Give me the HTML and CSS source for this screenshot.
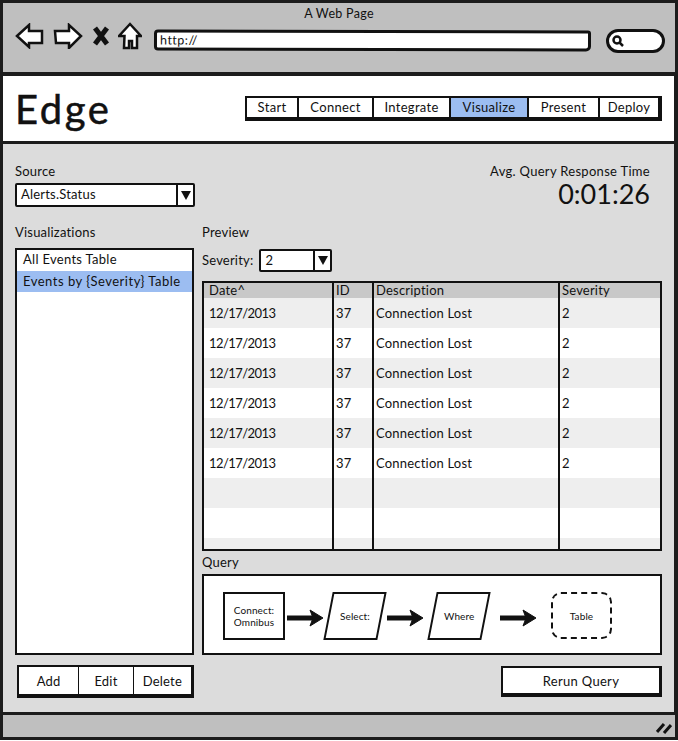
FILE: index.html
```html
<!DOCTYPE html>
<html lang="en">
<head>
<meta charset="utf-8">
<title>A Web Page</title>
<link rel="stylesheet" href="styles.css">
</head>
<body>
<div class="window">
  <header class="chrome">
    <div class="chrome-title">A Web Page</div>
    <div class="toolbar">
      <svg class="ico ico-back" viewBox="0 0 30 26"><path d="M2 13 L14 2 V8 H27 V20 H14 V24 Z"/></svg>
      <svg class="ico ico-fwd" viewBox="0 0 30 26"><path d="M2 8 H16 V2 L28 13 L16 25 V20 H3 Z"/></svg>
      <svg class="ico ico-x" viewBox="0 0 18 22"><path class="x" d="M3 3 L15 19 M15 3 L3 19"/></svg>
      <svg class="ico ico-home" viewBox="0 0 24 28"><path d="M12 2 L23 14 H19 V26 H14 V19 H11 V26 H6 L6.500 14 H1 Z"/></svg>
      <div class="address">http://</div>
      <div class="search"><svg class="glass" viewBox="0 0 12 12"><circle cx="5" cy="5" r="3.500"/><path d="M7.500 7.500 L11 11"/></svg></div>
    </div>
  </header>

  <section class="site-head">
    <h1 class="brand">Edge</h1>
    <nav class="tabs">
      <a class="tab tab-start">Start</a>
      <a class="tab tab-connect">Connect</a>
      <a class="tab tab-integrate">Integrate</a>
      <a class="tab tab-visualize is-active">Visualize</a>
      <a class="tab tab-present">Present</a>
      <a class="tab tab-deploy">Deploy</a>
    </nav>
  </section>

  <main class="main">
    <div class="top-row">
      <div class="source">
        <div class="label">Source</div>
        <div class="select select-source"><span class="select-val">Alerts.Status</span><span class="select-btn"><i class="caret"></i></span></div>
      </div>
      <div class="stat">
        <div class="stat-label">Avg. Query Response Time</div>
        <div class="stat-value">0:01:26</div>
      </div>
    </div>

    <div class="columns">
      <aside class="left">
        <div class="label">Visualizations</div>
        <ul class="list">
          <li class="list-item">All Events Table</li>
          <li class="list-item is-selected">Events by {Severity} Table</li>
        </ul>
        <div class="btn-group">
          <button class="btn btn-add">Add</button>
          <button class="btn btn-edit">Edit</button>
          <button class="btn btn-delete">Delete</button>
        </div>
      </aside>

      <section class="right">
        <div class="label">Preview</div>
        <div class="filter">
          <span class="filter-label">Severity:</span>
          <div class="select select-sev"><span class="select-val">2</span><span class="select-btn"><i class="caret"></i></span></div>
        </div>
        <div class="table-wrap">
          <table class="grid">
            <colgroup><col class="c1"><col class="c2"><col class="c3"><col class="c4"></colgroup>
            <thead><tr><th>Date^</th><th>ID</th><th>Description</th><th>Severity</th></tr></thead>
            <tbody>
              <tr><td>12/17/2013</td><td>37</td><td>Connection Lost</td><td>2</td></tr>
              <tr><td>12/17/2013</td><td>37</td><td>Connection Lost</td><td>2</td></tr>
              <tr><td>12/17/2013</td><td>37</td><td>Connection Lost</td><td>2</td></tr>
              <tr><td>12/17/2013</td><td>37</td><td>Connection Lost</td><td>2</td></tr>
              <tr><td>12/17/2013</td><td>37</td><td>Connection Lost</td><td>2</td></tr>
              <tr><td>12/17/2013</td><td>37</td><td>Connection Lost</td><td>2</td></tr>
              <tr><td></td><td></td><td></td><td></td></tr>
              <tr><td></td><td></td><td></td><td></td></tr>
              <tr><td></td><td></td><td></td><td></td></tr>
            </tbody>
          </table>
        </div>
        <div class="label label-query">Query</div>
        <div class="flow">
          <div class="node node-box">Connect:<br>Omnibus</div>
          <svg class="arrow" viewBox="0 0 38 18"><path d="M1 9 H28"/><path class="head" d="M24 1 L37 9 L24 17 L27 9 Z"/></svg>
          <div class="node node-para"><span>Select:</span></div>
          <svg class="arrow" viewBox="0 0 38 18"><path d="M1 9 H28"/><path class="head" d="M24 1 L37 9 L24 17 L27 9 Z"/></svg>
          <div class="node node-para node-para-2"><span>Where</span></div>
          <svg class="arrow arrow-wide" viewBox="0 0 38 18"><path d="M1 9 H28"/><path class="head" d="M24 1 L37 9 L24 17 L27 9 Z"/></svg>
          <div class="node node-dash">Table</div>
        </div>
        <div class="actions"><button class="btn-rerun">Rerun Query</button></div>
      </section>
    </div>
  </main>

  <footer class="statusbar">
    <svg class="grip" viewBox="0 0 16 12"><path d="M1 10 L8 2 M8 11 L15 3"/></svg>
  </footer>
</div>
</body>
</html>
```
FILE: styles.css
```css
* { box-sizing: border-box; }
html, body { margin: 0; padding: 0; background: #fff; }
body { font-family: "Lato", "Noto Sans", sans-serif; color: #111; font-size: 13px; }

.window {
  width: 678px; height: 740px;
  border: 3px solid #1c1c1c;
  display: flex; flex-direction: column;
  background: #1c1c1c;
  overflow: hidden;
}

/* browser chrome */
.chrome { height: 69px; background: #bfbfbf; padding-top: 3px; flex: none; }
.chrome-title { text-align: center; font-size: 12.5px; line-height: 15px; letter-spacing: .3px; }
.toolbar { display: flex; align-items: center; padding: 2px 10px 0 12px; height: 37px; }
.ico { display: block; flex: none; fill: #fff; stroke: #111; stroke-width: 2.5; stroke-linejoin: miter; margin-bottom: 9px; }
.ico-back { width: 30px; height: 26px; }
.ico-fwd { width: 30px; height: 26px; margin-left: 8px; }
.ico-x { width: 18px; height: 22px; margin-left: 9px; }
.ico-x .x { fill: none; stroke-width: 5; }
.ico-home { width: 24px; height: 28px; margin-left: 8px; }
.address {
  width: 438px; height: 21px; margin-left: 12px;
  background: #fff; border: 3px solid #111; border-radius: 4px 3px 5px 4px;
  font-size: 12.5px; line-height: 15px; padding-left: 3px; letter-spacing: .5px;
  transform: rotate(.15deg);
}
.search {
  width: 59px; height: 24px; margin-left: 15px;
  background: #fff; border: 3px solid #111; border-radius: 12px;
  display: flex; align-items: center; padding-left: 3px;
}
.glass { width: 12px; height: 12px; fill: none; stroke: #111; stroke-width: 2.500; }

/* site header */
.site-head {
  height: 65px; margin-top: 4px; margin-right: 1px;
  background: #fff; flex: none;
  display: flex; align-items: center; justify-content: space-between;
  padding: 0 12px 0 12px;
}
.brand { margin: 0; font-size: 40px; font-weight: 400; line-height: 1; letter-spacing: 2.500px; -webkit-text-stroke: .5px #111; }
.tabs { display: flex; width: 417px; height: 25px; margin-top: -1px; background: #111; padding: 2px 2px 4px 2px; gap: 2px; }
.tab { background: #fff; display: flex; align-items: center; justify-content: center; font-size: 13px; letter-spacing: .3px; }
.tab-start { width: 50px; }
.tab-connect { width: 73px; }
.tab-integrate { width: 75px; }
.tab-visualize { width: 76px; }
.tab-present { width: 69px; }
.tab-deploy { width: 58px; }
.is-active { background: #9cbdf1; }

/* main */
.main { flex: 1; min-height: 0; margin-top: 3px; background: #dcdcdc; padding: 19px 12px 0 12px; margin-right: 1px; }
.label { font-size: 13px; line-height: 16px; letter-spacing: .2px; }
.top-row { display: flex; justify-content: space-between; height: 61px; }
.source { width: 180px; }
.select {
  display: flex; background: #fff; border: 2px solid #111; border-radius: 2px;
  font-size: 13px; letter-spacing: .2px;
}
.select-source { height: 24px; margin-top: 4px; }
.select-val { flex: 1; padding-left: 4px; line-height: 19px; }
.select-btn { width: 17px; border-left: 2px solid #111; display: flex; align-items: center; justify-content: center; flex: none; }
.caret { display: block; width: 0; height: 0; border-left: 5px solid transparent; border-right: 5px solid transparent; border-top: 9px solid #111; }
.stat { text-align: right; padding-right: 12px; }
.stat-label { font-size: 13px; line-height: 17px; letter-spacing: .3px; }
.stat-value { font-size: 27px; line-height: 28px; letter-spacing: 0; }

.columns { display: grid; grid-template-columns: 179px 460px; column-gap: 8px; }
.left { display: flex; flex-direction: column; }
.list {
  list-style: none; margin: 8px 0 0; padding: 0;
  height: 407px; background: #fff; border: 2px solid #111;
}
.list-item { height: 21px; padding-left: 6px; line-height: 18px; font-size: 13px; letter-spacing: .3px; }
.list-item.is-selected { background: #9cbdf1; height: 21px; line-height: 21px; letter-spacing: .5px; }
.btn-group { display: flex; width: 177px; height: 33px; margin: 10px 0 0 2px; background: #111; padding: 2px 3px 4px 2px; gap: 1px; }
.btn { border: 0; background: #fff; font: inherit; font-size: 13px; padding: 0; color: #111; letter-spacing: .2px; }
.btn-add { width: 60px; }
.btn-edit { width: 54px; }
.btn-delete { width: 58px; }

.right { display: flex; flex-direction: column; }
.filter { display: flex; align-items: center; height: 24px; margin-top: 8px; }
.filter-label { font-size: 13px; letter-spacing: .2px; }
.select-sev { width: 73px; height: 23px; margin-left: 6px; }
.table-wrap { margin-top: 9px; width: 460px; height: 270px; background: #eee; border: 2px solid #111; overflow: hidden; }
.grid { border-collapse: collapse; table-layout: fixed; width: 456px; font-size: 13px; letter-spacing: .2px; }
.c1 { width: 129px; } .c2 { width: 40px; } .c3 { width: 186px; } .c4 { width: 101px; }
.grid th { height: 15px; padding: 0 0 1px 5px; background: #c8c8c8; font-weight: 400; text-align: left; line-height: 14px; border-left: 2px solid #111; overflow: hidden; }
.grid td { height: 30px; padding: 0 0 0 5px; border-left: 2px solid #111; line-height: 30px; vertical-align: middle; overflow: hidden; }
.grid td:first-child { letter-spacing: -.55px; }
.grid td:nth-child(n+2), .grid th:nth-child(n+2) { padding-left: 2px; }
.grid th:first-child, .grid td:first-child { border-left: 0; }
.grid tbody tr:nth-child(odd) { background: #eee; }
.grid tbody tr:nth-child(even) { background: #fff; }
.label-query { margin-top: 2px; height: 21px; padding-top: 1px; }
.flow {
  width: 460px; height: 81px; background: #fff; border: 2px solid #111;
  display: flex; align-items: center; padding: 2px 0 0 19px;
  font-size: 10px; letter-spacing: .1px;
}
.node { flex: none; display: flex; align-items: center; justify-content: center; text-align: center; line-height: 12px; height: 48px; }
.node-box { width: 62px; border: 2px solid #111; }
.node-para { width: 54px; border: 2px solid #111; transform: skewX(-11deg); margin: 0 3px 0 4px; }
.node-para-2 { margin-left: 8px; }
.node-para span { transform: skewX(11deg); display: block; }
.node-dash { width: 61px; margin-left: 14px; border: 2px dashed #111; border-radius: 10px; height: 47px; }
.arrow { width: 38px; height: 18px; flex: none; fill: #111; stroke: #111; stroke-width: 5; margin: 4px 0 0 1px; }
.arrow .head { stroke-width: 1; }
.arrow-wide { margin-left: 10px; }
.actions { display: flex; justify-content: flex-end; margin-top: 11px; }
.btn-rerun { width: 161px; height: 31px; background: #fff; border: 2px solid #111; border-bottom-width: 4px; border-right-width: 3px; font: inherit; font-size: 13px; color: #111; letter-spacing: .3px; padding: 0; }

.statusbar { height: 22px; margin-top: 3px; background: #bfbfbf; display: flex; justify-content: flex-end; align-items: center; padding-right: 3px; flex: none; }
.grip { width: 16px; height: 12px; margin-top: 3px; fill: none; stroke: #111; stroke-width: 3; }
```
